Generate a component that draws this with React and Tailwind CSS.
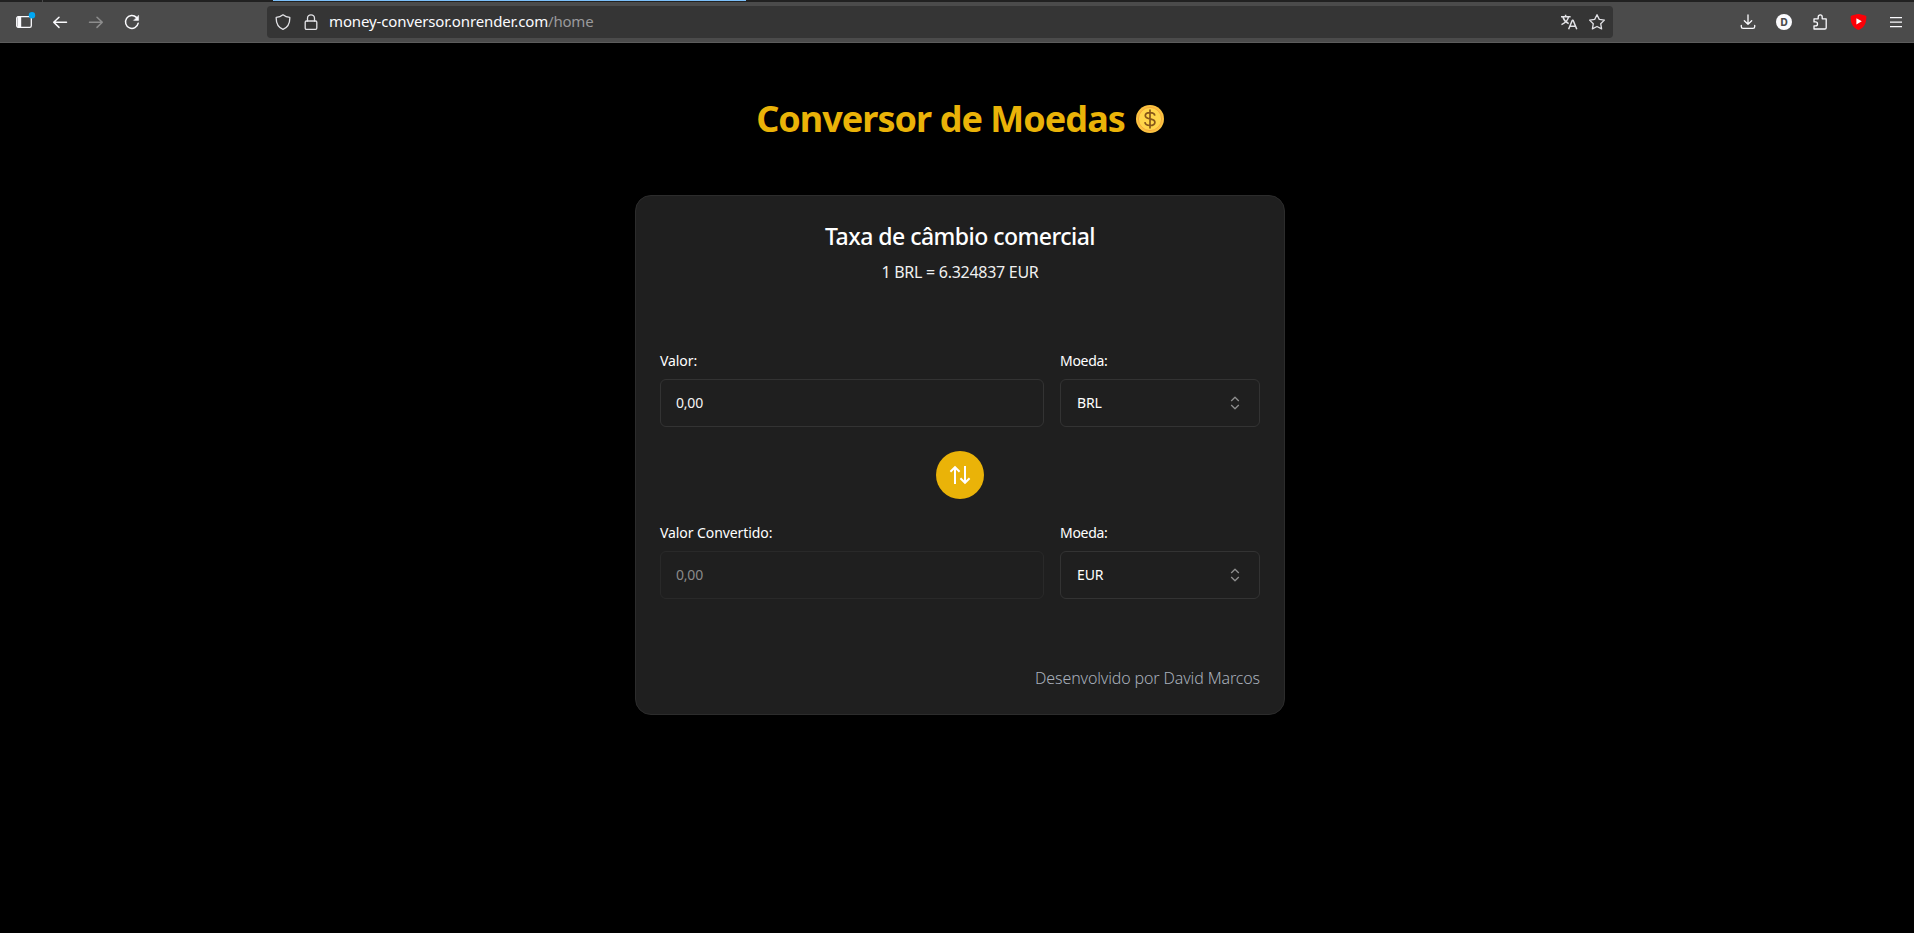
const line = {
  fill: "none",
  stroke: "currentColor",
  strokeWidth: 1.3,
  strokeLinecap: "round",
  strokeLinejoin: "round",
};

function Icon({ children, className = "" }) {
  return (
    <svg width="16" height="16" viewBox="0 0 16 16" className={"shrink-0 " + className} {...line}>
      {children}
    </svg>
  );
}

function Coin() {
  return (
    <svg width="28" height="28" viewBox="0 0 28 28" className="shrink-0">
      <circle cx="14" cy="14" r="14" fill="#fbc240" />
      <circle cx="14" cy="14" r="11.6" fill="#ffd54a" stroke="#f2a23c" strokeWidth="0.9" />
      <path
        d="M18.8 10.600C18.500 8.500 16.700 7.600 14 7.600c-2.900 0-4.700 1.200-4.700 3.100 0 4.400 9.600 2 9.600 6.500 0 2.100-2 3.300-4.900 3.300-2.900 0-4.800-1.200-5.100-3.400M14 4.400v19.200"
        fill="none"
        stroke="#85561a"
        strokeWidth="1.700"
      />
    </svg>
  );
}

function Toolbar() {
  return (
    <header className="w-[1914px] font-['Noto_Sans',sans-serif]">
      <div className="flex h-0.5 bg-[#212121]">
        <div className="ml-[42px] h-0.5 w-px bg-[#4a4a4a]" />
        <div className="ml-[230px] h-px w-[473px] bg-[#7cc0fa]" />
      </div>
      <div className="flex h-[41px] items-center border-b border-[#5c5c5c] bg-[#4b4b4b] pr-2.5 text-[#fbfbfe]">
        <div className="flex items-center gap-5 pl-4">
          <svg width="20" height="20" viewBox="0 0 20 20" className="-mr-1 shrink-0">
            <rect x="0.7" y="4.7" width="14.6" height="10.6" rx="1.6" fill="none" stroke="#fbfbfe" strokeWidth="1.3" />
            <path d="M1.5 4.5h3.7v11H1.5z" fill="#fbfbfe" />
            <circle cx="16" cy="3.3" r="3.2" fill="#00a8f5" />
          </svg>
          <Icon>
            <path d="M14.5 8.3H1.7M7 3.2 1.7 8.3 7 13.4" strokeWidth="1.5" />
          </Icon>
          <Icon className="text-[#8d8d8d]">
            <path d="M1.5 8.3h12.8M9 3.2l5.3 5.1L9 13.4" strokeWidth="1.5" />
          </Icon>
          <Icon>
            <path d="M14.2 9.2A6.4 6.4 0 1 1 12.4 3.4" strokeWidth="1.5" />
            <path d="M14.6 1.6v4.8H9.8z" fill="currentColor" strokeWidth="0.5" />
          </Icon>
        </div>
        <div className="ml-[127px] flex h-8 w-[1346px] items-center rounded bg-[#353535] pl-2 pr-2 text-[#e2e2e6]">
          <Icon>
            <path d="M8 .8C10 2.4 12.2 3.2 14.8 3.4c.2 5.4-2 9.9-6.8 12C3.200 13.300 1 8.800 1.200 3.400 3.800 3.200 6 2.400 8 .8Z" />
          </Icon>
          <Icon className="ml-3">
            <rect x="2.2" y="7" width="11.600" height="8.300" rx="1.200" />
            <path d="M4.500 7V4.300a3.500 3.500 0 0 1 7 0V7" />
          </Icon>
          <div className="mb-0.5 ml-2.5 whitespace-pre text-[15px] leading-5 tracking-[-0.13px] text-[#fbfbfe]">
            money-conversor.onrender.com<span className="tracking-[-0.2px] text-[#9a9a9c]">/home</span>
          </div>
          <svg width="18" height="16" viewBox="0 0 18 16" className="ml-auto shrink-0" {...line} strokeWidth="1.5" strokeLinecap="butt">
            <path d="M1 2.700h9.600M5.600.700v2M8.600 2.700C8 6 5 9 1.500 10.700M3 3.200c.9 2.900 3 5 5.700 6.500" />
            <path d="m8.600 15.300 3.700-9h.8l3.700 9M9.900 12.300h5.600" />
          </svg>
          <Icon className="ml-[11px]">
            <path d="m8 .7 2.300 4.700 5.100.7-3.700 3.600.9 5.200L8 12.500l-4.600 2.400.9-5.200L.6 6.100l5.100-.7z" />
          </Icon>
        </div>
        <div className="ml-auto flex items-center">
          <Icon>
            <path d="M8 1v9M4.300 6.700 8 10.300l3.700-3.600M1.300 11.300v1.400c0 1 .8 1.700 1.800 1.700h9.800c1 0 1.800-.7 1.800-1.700v-1.400" />
          </Icon>
          <div className="ml-5 flex size-4 items-center justify-center rounded-full bg-[#fbfbfe] font-['Inter',sans-serif] text-[10px] font-extrabold leading-none text-[#4b4b4b]">
            D
          </div>
          <Icon className="ml-5">
            <path d="M2 15V11.900h1.500a2 2 0 0 0 0-4H2V4.800h4.200V2.900a2 2 0 0 1 4 0v1.900h4V13.700c0 .8-.5 1.300-1.300 1.300z" />
          </Icon>
          <svg width="17" height="16" viewBox="0 0 17 16" className="ml-[22px] shrink-0">
            <path d="M8.500 0c2.300.3 5 .8 7.800 1.900.3 6.700-1.600 11.500-7.800 14C2.300 13.400.4 8.600.7 1.900 3.500.8 6.200.300 8.500 0Z" fill="#fb0007" />
            <path d="M6.400 4.200v6.200l5.400-3.100z" fill="#fff" />
          </svg>
          <svg width="12" height="16" viewBox="0 0 12 16" className="ml-[23px] mr-0.5 shrink-0" stroke="currentColor" strokeWidth="1.200">
            <path d="M0 3.600h12M0 8.100h12M0 12.600h12" />
          </svg>
        </div>
      </div>
    </header>
  );
}

function Carets() {
  return (
    <svg width="10" height="14" viewBox="0 0 10 14" className="text-[#8f8f8f]" {...line} strokeLinecap="butt">
      <path d="M1.200 5 5 1.300 8.800 5M1.200 9 5 12.700 8.800 9" />
    </svg>
  );
}

function Field({ label, disabled }) {
  return (
    <div className="flex w-96 flex-col gap-2">
      <label className="text-sm tracking-[-0.08px] text-white">{label}</label>
      <div
        className={
          "flex h-12 items-center rounded-md border px-[15px] text-sm tracking-[-0.2px] " +
          (disabled ? "border-[#292929] text-[#8a8a8a]" : "border-[#333333] text-[#f5f5f5]")
        }
      >
        0,00
      </div>
    </div>
  );
}

function Currency({ code }) {
  return (
    <div className="flex w-[200px] flex-col gap-2">
      <label className="text-sm tracking-[-0.3px] text-white">Moeda:</label>
      <button className="flex h-12 items-center justify-between rounded-md border border-[#333333] pl-4 pr-[19px] text-sm tracking-[-0.1px] text-white">
        {code}
        <Carets />
      </button>
    </div>
  );
}

export default function App() {
  return (
    <div className="h-[933px] w-full overflow-hidden bg-black font-['Noto_Sans',sans-serif]">
      <Toolbar />
      <main className="flex w-[1920px] flex-col items-center pt-14">
        <h1 className="flex h-10 items-center gap-[11px] text-4xl font-bold tracking-[-0.97px] text-[#eab308]">
          Conversor de Moedas
          <Coin />
        </h1>
        <section className="mt-14 flex h-[520px] w-[650px] flex-col rounded-2xl border border-[#2c2c2c] bg-[#1f1f1f] px-6 pb-6 pt-6">
          <h2 className="text-center text-[23px] font-medium leading-8 tracking-[-0.52px] text-white">
            Taxa de câmbio comercial
          </h2>
          <p className="mt-2 text-center text-base tracking-[-0.28px] text-[#f0f0f0]">
            1 BRL = 6.324837 EUR
          </p>
          <div className="mt-[67px] flex gap-4">
            <Field label="Valor:" />
            <Currency code="BRL" />
          </div>
          <button className="my-6 flex size-12 items-center justify-center self-center rounded-full bg-[#eab308] text-white">
            <svg width="24" height="24" viewBox="0 0 24 24" {...line} strokeWidth="2" strokeLinecap="butt" strokeLinejoin="miter">
              <path d="M7 21V4.500M2.400 8.800 7 4.200l4.600 4.600M17 3v16.500M12.400 15.200l4.600 4.600 4.600-4.600" />
            </svg>
          </button>
          <div className="flex gap-4">
            <Field label="Valor Convertido:" disabled />
            <Currency code="EUR" />
          </div>
          <p className="mt-auto self-end text-base font-light tracking-[-0.13px] text-[#a8afbb]">
            Desenvolvido por David Marcos
          </p>
        </section>
      </main>
    </div>
  );
}
